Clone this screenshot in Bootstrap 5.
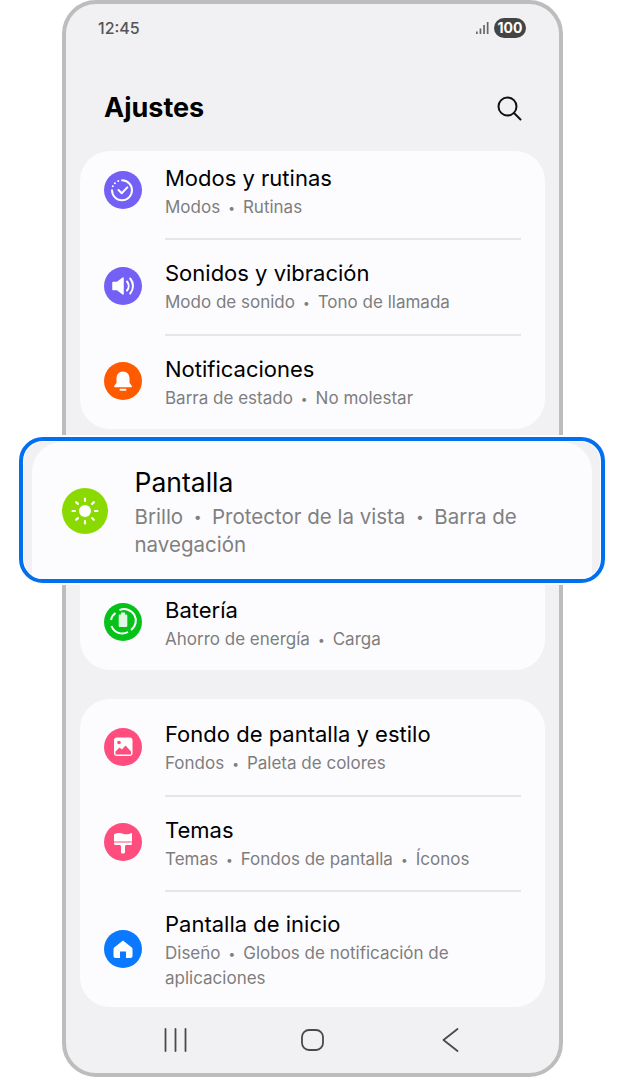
<!DOCTYPE html>
<html lang="es">
<head>
    <meta charset="UTF-8">
    <meta name="viewport" content="width=device-width, initial-scale=1.0">
    <title>Ajustes</title>
    <link href="https://cdn.jsdelivr.net/npm/bootstrap@5.3.2/dist/css/bootstrap.min.css" rel="stylesheet">
    <style>
        body {
            background: #fff;
            font-family: "Inter", "Liberation Sans", sans-serif;
            overflow: hidden;
        }
        .phone {
            position: relative;
            width: 501px;
            height: 1077px;
            margin-left: 62px;
            padding: 0 14px;
            background: #f1f1f3;
            border: 4px solid #bdbdbd;
            border-radius: 34px;
        }
        .status-bar {
            height: 48px;
            padding: 0 19px 0 18px;
            color: #555;
            font-size: 16px;
            font-weight: 500;
        }
        .batt-pill {
            width: 32px;
            height: 20px;
            border-radius: 10px;
            background: #444;
            color: #fff;
            font-size: 14px;
            font-weight: 700;
            line-height: 20px;
            text-align: center;
        }
        .page-head {
            height: 99px;
            padding: 13px 23px 0 24px;
        }
        .page-title {
            font-size: 27px;
            font-weight: 700;
            color: #000;
            margin: 0;
        }
        .set-card {
            background: #fcfcff;
            border: 0;
            border-radius: 30px;
            margin-bottom: 29px;
            padding: 0 24px;
        }
        .set-row {
            height: 95.5px;
            gap: 23px;
        }
        .set-row + .set-row .row-text::before {
            content: "";
            position: absolute;
            left: 0;
            right: 0;
            top: 0;
            border-top: 2px solid #e6e6e8;
        }
        .row-first { height: 87px; padding-bottom: 10px; }
        .row-tall { height: 117px; }
        .row-gap { height: 116.5px; }
        .row-text {
            position: relative;
            flex: 1;
            align-self: stretch;
            display: flex;
            flex-direction: column;
            justify-content: center;
            padding-top: 2px;
        }
        .row-first .row-text { margin-bottom: -10px; padding-bottom: 7px; padding-top: 0; }
        .row-title {
            font-size: 22px;
            line-height: 31px;
            color: #000;
        }
        .row-sub {
            font-size: 17px;
            line-height: 24px;
            color: #7e7e7e;
            margin-top: 1px;
        }
        .row-sub i {
            font-style: normal;
            font-size: 12px;
            margin: 0 8px;
            vertical-align: 1px;
        }
        .ico {
            flex: none;
            width: 38px;
            height: 38px;
            border-radius: 50%;
        }
        .ico svg { display: block; width: 100%; height: 100%; }
        .bg-violet { background: #7460f5; }
        .bg-orange { background: #ff5a00; }
        .bg-green { background: #07c11b; }
        .bg-pink { background: #ff4d7d; }
        .bg-blue { background: #0a78ff; }
        .bg-lime { background: #8ad900; }
        .nav-keys {
            position: absolute;
            left: 0;
            right: 0;
            bottom: 0;
            height: 70px;
        }
        /* highlighted row lying over the list */
        .hl-wrap {
            position: absolute;
            left: -47px;
            top: 433px;
            width: 586px;
            height: 146px;
            padding: 1px 9px 0 9px;
            background: #f1f1f3;
            border: 4px solid #0070f0;
            border-radius: 24px;
            overflow: hidden;
            box-shadow: 0 0 0 2px #fff, inset 0 0 0 1px #fff;
        }
        .hl-card {
            height: 100%;
            background: #fcfcff;
            border-radius: 30px 30px 0 0;
            padding: 0 20px 0 29.5px;
            gap: 27px;
        }
        .hl-card .ico { width: 46px; height: 46px; }
        .hl-text { padding-top: 3px; }
        .hl-title { font-size: 26.5px; line-height: 34px; color: #000; margin-bottom: 4px; }
        .hl-sub { font-size: 20.5px; line-height: 28px; color: #808080; }
        .hl-sub i {
            font-style: normal;
            font-size: 14px;
            margin: 0 10.5px;
            vertical-align: 2px;
        }
    </style>
</head>
<body>
<div class="phone">
    <!-- Status bar -->
    <div class="status-bar d-flex justify-content-between align-items-center">
        <span>12:45</span>
        <div class="d-flex align-items-center gap-1">
            <svg width="14" height="14" viewBox="0 0 14 14" fill="#666"><rect x="0" y="10.500" width="1.700" height="2.500"/><rect x="3.600" y="7.500" width="1.700" height="5.500"/><rect x="7.200" y="4" width="1.700" height="9"/><rect x="10.800" y="1" width="1.700" height="12"/></svg>
            <div class="batt-pill">100</div>
        </div>
    </div>

    <!-- Title -->
    <div class="page-head d-flex justify-content-between align-items-center">
        <h1 class="page-title">Ajustes</h1>
        <svg width="26" height="26" viewBox="0 0 26 26" fill="none" stroke="#111" stroke-width="2" stroke-linecap="round"><circle cx="11.500" cy="11.500" r="9"/><path d="M18 18l6.500 6.500"/></svg>
    </div>

    <div class="card set-card">
        <div class="set-row row-first d-flex align-items-center">
            <div class="ico bg-violet">
                <svg viewBox="0 0 38 38" fill="none" stroke="#fff" stroke-width="2" stroke-linecap="round" stroke-linejoin="round"><path d="M18 9.300a10 10 0 1 1-10 10"/><path d="M8.800 15.300l.01 0M10.900 12.200l.01 0M14.200 10l.01 0"/><path d="M14.500 19l3.200 3.200 5.600-5.800"/></svg>
            </div>
            <div class="row-text">
                <div class="row-title">Modos y rutinas</div>
                <div class="row-sub">Modos<i>•</i>Rutinas</div>
            </div>
        </div>
        <div class="set-row d-flex align-items-center">
            <div class="ico bg-violet">
                <svg viewBox="0 0 38 38" fill="none"><path d="M9 15.500h4l6-4.500v16l-6-4.500H9z" fill="#fff" stroke="#fff" stroke-width="1.500" stroke-linejoin="round"/><path d="M23 14.500a7 7 0 0 1 0 9M26.200 11.500a11.500 11.500 0 0 1 0 15" stroke="#fff" stroke-width="2" stroke-linecap="round"/></svg>
            </div>
            <div class="row-text">
                <div class="row-title">Sonidos y vibración</div>
                <div class="row-sub">Modo de sonido<i>•</i>Tono de llamada</div>
            </div>
        </div>
        <div class="set-row d-flex align-items-center">
            <div class="ico bg-orange">
                <svg viewBox="0 0 38 38" fill="#fff"><path d="M19 9.500c-4 0-6.500 3-6.500 6.800v4.400L10.200 24c-.4.600 0 1.200.7 1.200h16.200c.7 0 1.100-.6.7-1.200l-2.300-3.300v-4.400c0-3.800-2.500-6.800-6.500-6.800z"/><rect x="15.500" y="26.800" width="7" height="2" rx="1"/></svg>
            </div>
            <div class="row-text">
                <div class="row-title">Notificaciones</div>
                <div class="row-sub">Barra de estado<i>•</i>No molestar</div>
            </div>
        </div>
    </div>

    <div class="card set-card">
        <div class="row-gap"></div>
        <div class="set-row d-flex align-items-center">
            <div class="ico bg-green">
                <svg viewBox="0 0 38 38" fill="none"><path d="M15.500 7.200a11.500 11.500 0 0 1 11.500 19.800M24 29a11.500 11.500 0 0 1-16.500-6M7 17a11.500 11.500 0 0 1 4.500-7" stroke="#fff" stroke-width="2"/><path d="M17 9.500h4v2h1c.8 0 1.300.5 1.300 1.300v10c0 .8-.5 1.200-1.300 1.200h-6c-.8 0-1.300-.4-1.300-1.200v-10c0-.8.500-1.300 1.300-1.300h1z" fill="#fff" opacity=".88"/></svg>
            </div>
            <div class="row-text">
                <div class="row-title">Batería</div>
                <div class="row-sub">Ahorro de energía<i>•</i>Carga</div>
            </div>
        </div>
    </div>

    <div class="card set-card">
        <div class="set-row d-flex align-items-center">
            <div class="ico bg-pink">
                <svg viewBox="0 0 38 38"><rect x="10" y="9.500" width="18.500" height="18.500" rx="3" fill="#fff"/><circle cx="15" cy="14.500" r="1.800" fill="#ff4d7d"/><path d="M11.500 26.500v-3l4-4 2.500 2 3.500-4 5.500 6v3z" fill="#ff4d7d"/></svg>
            </div>
            <div class="row-text">
                <div class="row-title">Fondo de pantalla y estilo</div>
                <div class="row-sub">Fondos<i>•</i>Paleta de colores</div>
            </div>
        </div>
        <div class="set-row d-flex align-items-center">
            <div class="ico bg-pink">
                <svg viewBox="0 0 38 38" fill="#fff"><path d="M10 11.500c3-1.800 6-1.800 9-.8s6 .8 9-1v8.800H10z"/><path d="M10 19.500h18v1.300c0 .7-.5 1.200-1.200 1.200h-4.300c-.8 0-1.500.7-1.500 1.500v5.700c0 .7-.9 1.300-2 1.300s-2-.6-2-1.300v-5.700c0-.8-.7-1.500-1.500-1.500h-4.300c-.7 0-1.200-.5-1.200-1.200z"/></svg>
            </div>
            <div class="row-text">
                <div class="row-title">Temas</div>
                <div class="row-sub">Temas<i>•</i>Fondos de pantalla<i>•</i>Íconos</div>
            </div>
        </div>
        <div class="set-row row-tall d-flex align-items-center">
            <div class="ico bg-blue">
                <svg viewBox="0 0 38 38" fill="#fff"><path d="M19 10.500l8.800 7c.5.400.7.900.7 1.500v7c0 1.100-.9 2-2 2h-4.500v-6.500h-6V28H11.500c-1.100 0-2-.9-2-2v-7c0-.6.200-1.100.7-1.500z"/></svg>
            </div>
            <div class="row-text">
                <div class="row-title">Pantalla de inicio</div>
                <div class="row-sub">Diseño<i>•</i>Globos de notificación de aplicaciones</div>
            </div>
        </div>
    </div>

    <!-- Navigation keys -->
    <div class="nav-keys">
        <svg width="493" height="70" viewBox="0 0 493 70" fill="none" stroke="#4a4a4a" stroke-width="1.800" stroke-linecap="round" stroke-linejoin="round"><path d="M99.500 26v22M109.500 26v22M119.500 26v22"/><rect x="236" y="27" width="21" height="20" rx="7"/><path d="M391.500 26l-14 11 14 11"/></svg>
    </div>

    <!-- Highlighted row -->
    <div class="hl-wrap">
        <div class="hl-card d-flex align-items-center">
            <div class="ico bg-lime">
                <svg viewBox="0 0 46 46" fill="none" stroke="#fff" stroke-width="2.200" stroke-linecap="round"><circle cx="23" cy="23" r="6" fill="#fff" stroke="none"/><path d="M23 10.500v2.500M23 33v2.500M10.500 23H13M33 23h2.500M14.200 14.200l1.700 1.700M30.100 30.100l1.700 1.700M14.200 31.800l1.700-1.700M30.100 15.900l1.700-1.700"/></svg>
            </div>
            <div class="hl-text flex-grow-1">
                <div class="hl-title">Pantalla</div>
                <div class="hl-sub">Brillo<i>•</i>Protector de la vista<i>•</i>Barra de navegación</div>
            </div>
        </div>
    </div>
</div>
<script src="https://cdn.jsdelivr.net/npm/bootstrap@5.3.2/dist/js/bootstrap.bundle.min.js"></script>
</body>
</html>
